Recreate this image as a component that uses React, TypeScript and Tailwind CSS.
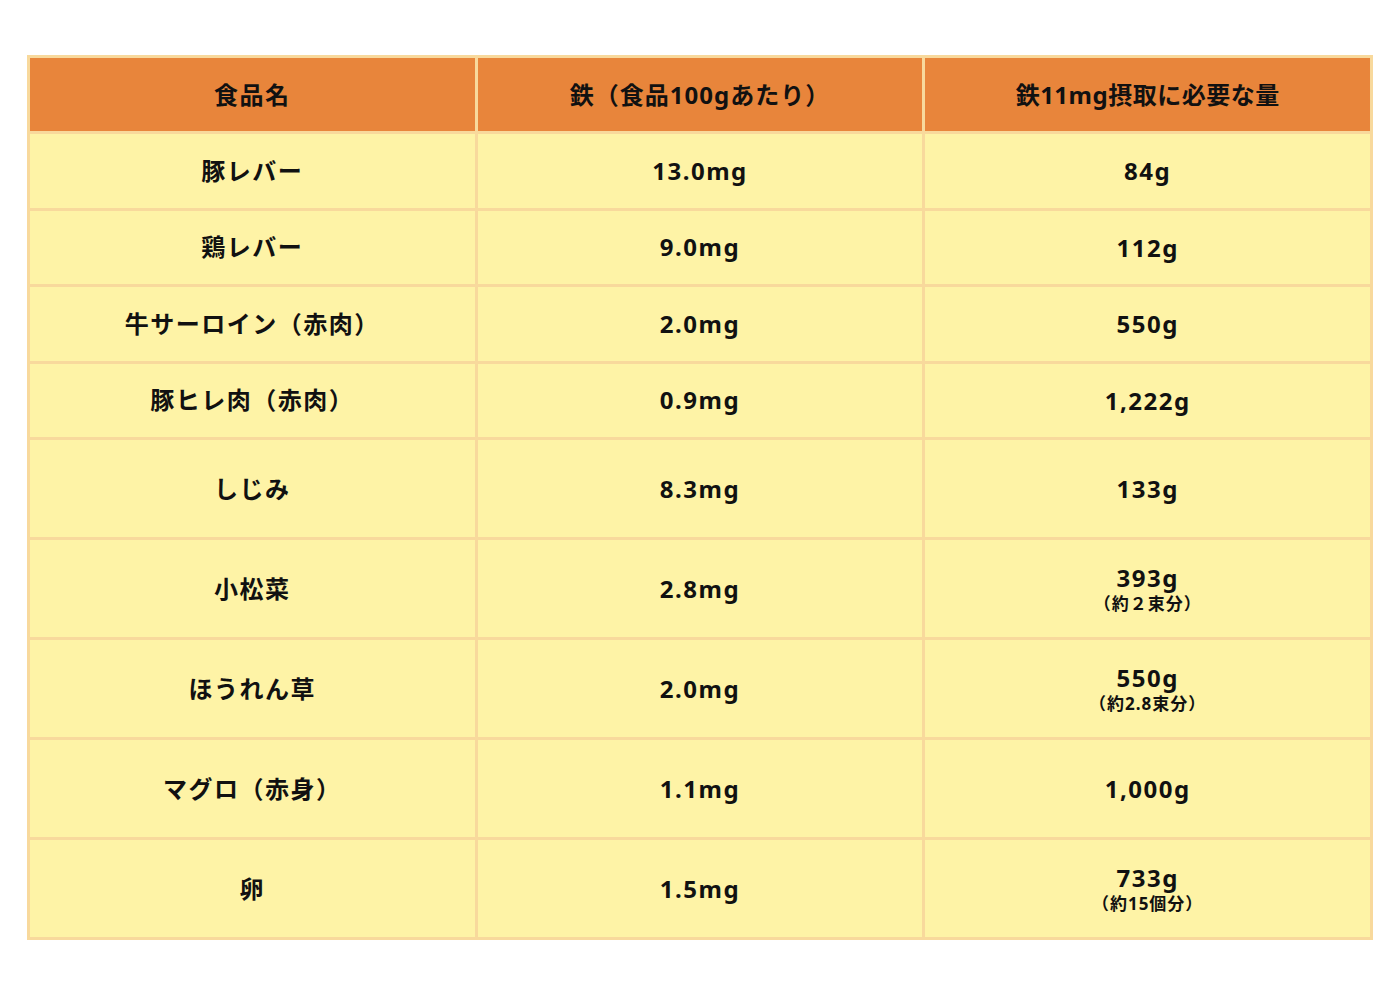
import React from 'react';

type Row = { name: string; iron: string; amount: string; note?: string; tall?: boolean };

const rows: Row[] = [
  { name: '豚レバー', iron: '13.0mg', amount: '84g' },
  { name: '鶏レバー', iron: '9.0mg', amount: '112g' },
  { name: '牛サーロイン（赤肉）', iron: '2.0mg', amount: '550g' },
  { name: '豚ヒレ肉（赤肉）', iron: '0.9mg', amount: '1,222g' },
  { name: 'しじみ', iron: '8.3mg', amount: '133g', tall: true },
  { name: '小松菜', iron: '2.8mg', amount: '393g', note: '（約２束分）', tall: true },
  { name: 'ほうれん草', iron: '2.0mg', amount: '550g', note: '（約2.8束分）', tall: true },
  { name: 'マグロ（赤身）', iron: '1.1mg', amount: '1,000g', tall: true },
  { name: '卵', iron: '1.5mg', amount: '733g', note: '（約15個分）', tall: true },
];

const font = { fontFamily: '"Noto Sans", "Noto Sans CJK JP", sans-serif' };

const Cell: React.FC<{ children: React.ReactNode; tall?: boolean; head?: boolean }> = ({ children, tall, head }) => (
  <div
    className={`flex flex-col items-center justify-center text-center text-[#111111] ${
      head ? 'h-[73px] bg-[#e8853b]' : tall ? 'h-[97px] bg-[#fef3a6]' : 'h-[73.5px] bg-[#fef3a6]'
    }`}
  >
    {children}
  </div>
);

export default function App() {
  return (
    <div className="min-h-[988px] w-[1400px] bg-white pt-[55px] pl-[27px]" style={font}>
      <div className="grid w-[1346px] grid-cols-3 gap-[3px] bg-[#f8d99c] p-[3px] font-bold">
        <Cell head>
          <span className="text-[24px] tracking-[1.5px]">食品名</span>
        </Cell>
        <Cell head>
          <span className="text-[24px] tracking-[1px]">鉄（食品100gあたり）</span>
        </Cell>
        <Cell head>
          <span className="text-[24px] tracking-[0.5px]">鉄11mg摂取に必要な量</span>
        </Cell>

        {rows.map((r) => (
          <React.Fragment key={r.name}>
            <Cell tall={r.tall}>
              <span className="text-[24px] tracking-[1.5px]">{r.name}</span>
            </Cell>
            <Cell tall={r.tall}>
              <span className="text-[24px] tracking-[1.5px]">{r.iron}</span>
            </Cell>
            <Cell tall={r.tall}>
              <span className="text-[24px] leading-[31px] tracking-[1.5px]">{r.amount}</span>
              {r.note && <span className="text-[17px] leading-[22px] tracking-[1px]">{r.note}</span>}
            </Cell>
          </React.Fragment>
        ))}
      </div>
    </div>
  );
}
